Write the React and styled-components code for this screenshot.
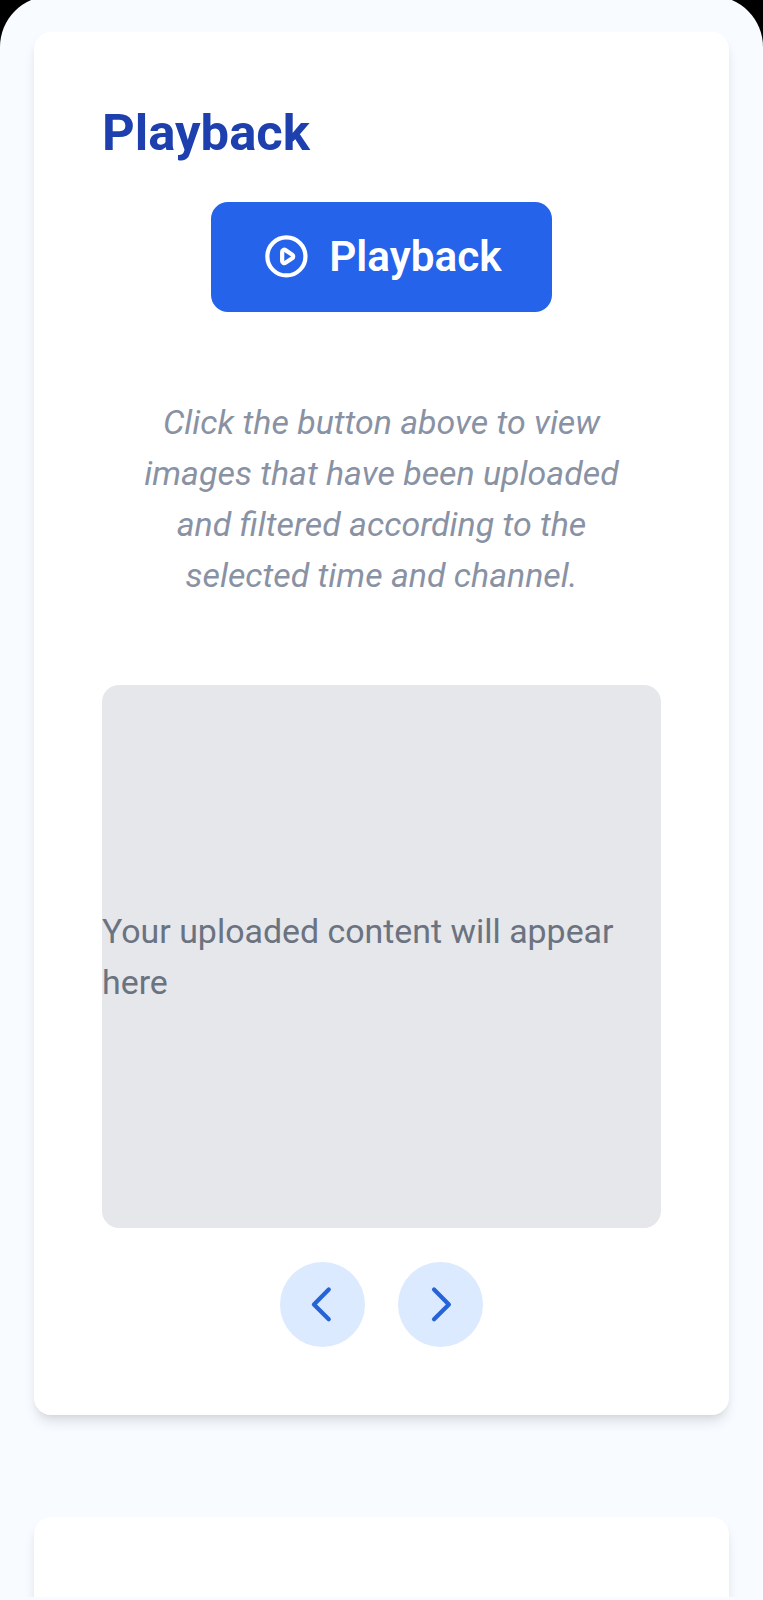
import React from "react";
import styled, { createGlobalStyle } from "styled-components";

const Global = createGlobalStyle`
  *, *::before, *::after { box-sizing: border-box; }
  html { font-size: 33.9px; background: #000; }
  body { margin: 0; font-family: Roboto, "Liberation Sans", sans-serif; line-height: 1.5; overflow: hidden; }
  h2, p { margin: 0; }
`;

const Device = styled.div`
  height: 1600px;
  overflow: hidden;
  background: #000;
`;

const Screen = styled.main`
  height: 1620px;
  margin-top: -4px;
  padding: 36px 34px 0 34px;
  border-radius: 51px 51px 0 0;
  background: #f8fbff;
`;

const Viewport = styled.div`
  height: 1565px;
  margin: 0 -33px;
  padding: 0 33px;
  overflow: hidden;
`;

const Card = styled.section`
  min-height: ${(p) => p.$minHeight || "0"};
  padding: 68px 68px 67.6px;
  border-radius: 17px;
  background: #fff;
  box-shadow: 0 8.5px 12.7px -2.1px rgba(0, 0, 0, 0.1),
    0 4.2px 8.5px -4.2px rgba(0, 0, 0, 0.1);

  & + & { margin-top: 102px; }
`;

const Title = styled.h2`
  margin-bottom: 35.6px;
  color: #1e40af;
  font-size: 50.8px;
  line-height: 66px;
  font-weight: 700;
`;

const Centered = styled.div`
  display: flex;
  justify-content: center;
  gap: ${(p) => p.$gap || "0"};
`;

const PlayButton = styled.button`
  display: inline-flex;
  align-items: center;
  gap: 17px;
  height: 110px;
  padding: 0 50.5px 0.5px;
  border: 0;
  border-radius: 17px;
  background: #2563eb;
  color: #fff;
  font: 600 42.3px/59px Roboto, "Liberation Sans", sans-serif;
`;

const Icon = styled.svg`
  display: block;
  width: 50.8px;
  height: 50.8px;
  flex: none;
  fill: none;
  stroke: currentColor;
  stroke-width: 2;
  stroke-linecap: round;
  stroke-linejoin: round;
`;

const Hint = styled.p`
  margin: 85px 0 84.8px;
  padding: 0 34px;
  color: #8992a4;
  font-size: 33.9px;
  line-height: 51px;
  font-style: italic;
  text-align: center;
`;

const Preview = styled.div`
  display: flex;
  align-items: center;
  height: 543px;
  margin-bottom: 34px;
  border-radius: 17px;
  background: #e5e7eb;
  color: #6b7280;
  font-size: 33.9px;
  line-height: 51px;
`;

const RoundButton = styled.button`
  display: grid;
  place-items: center;
  width: 84.8px;
  height: 84.8px;
  padding: 0;
  border: 0;
  border-radius: 50%;
  background: #dbeafe;
  color: #2563d6;
`;

export default function App() {
  return (
    <Device>
      <Global />
      <Screen>
        <Viewport>
          <Card>
            <Title>Playback</Title>
            <Centered>
              <PlayButton>
                <Icon viewBox="0 0 24 24" aria-hidden="true">
                  <path d="M14.752 11.168l-3.197-2.132A1 1 0 0010 9.87v4.263a1 1 0 001.555.832l3.197-2.132a1 1 0 000-1.664z" />
                  <path d="M21 12a9 9 0 11-18 0 9 9 0 0118 0z" />
                </Icon>
                Playback
              </PlayButton>
            </Centered>
            <Hint>
              Click the button above to view images that have been uploaded and
              filtered according to the selected time and channel.
            </Hint>
            <Preview>
              <p>Your uploaded content will appear here</p>
            </Preview>
            <Centered $gap="33.8px">
              <RoundButton aria-label="Previous">
                <Icon viewBox="0 0 24 24" aria-hidden="true">
                  <path d="M15 19l-7-7 7-7" />
                </Icon>
              </RoundButton>
              <RoundButton aria-label="Next">
                <Icon viewBox="0 0 24 24" aria-hidden="true">
                  <path d="M9 5l7 7-7 7" />
                </Icon>
              </RoundButton>
            </Centered>
          </Card>
          <Card $minHeight="300px" />
        </Viewport>
      </Screen>
    </Device>
  );
}
